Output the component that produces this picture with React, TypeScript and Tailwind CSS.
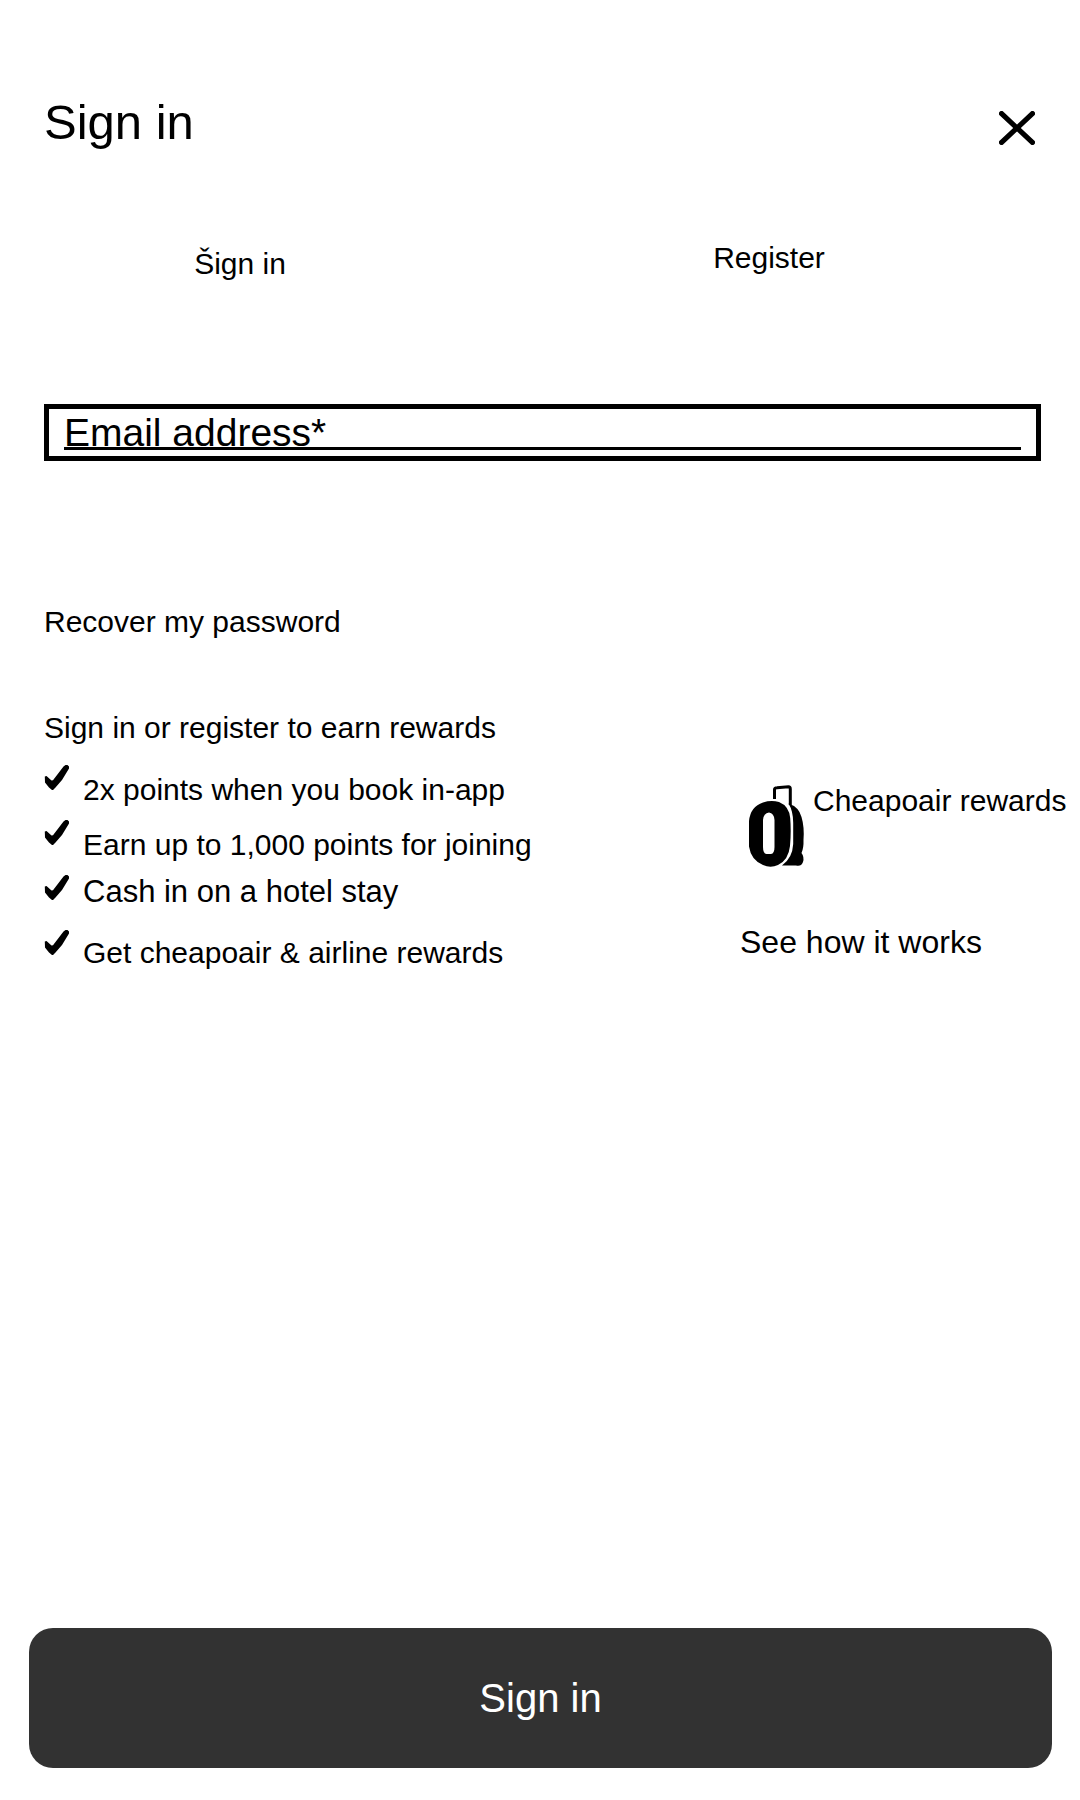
const perks = [
  { text: "2x points when you book in-app", className: "pt-2" },
  { text: "Earn up to 1,000 points for joining", className: "pt-2" },
  { text: "Cash in on a hotel stay", className: "text-[31px]" },
  { text: "Get cheapoair & airline rewards", className: "pt-1.5" },
];

function CloseIcon() {
  return (
    <svg width="36" height="34" viewBox="0 0 36 34" fill="none" stroke="#000" strokeWidth="5.2" strokeLinecap="round" aria-hidden="true">
      <path d="M2.6 2.6 33.4 31.4M33.4 2.6 2.6 31.4" />
    </svg>
  );
}

function CheckIcon() {
  return (
    <svg className="shrink-0" width="26" height="25" viewBox="0 0 26 25" aria-hidden="true">
      <path d="M.8 11.500 2.500 11 7.500 15.500 9 15.200 19.500 1.500 21.500 0H23.500L25 1.500V3.500L18 15 11.500 22.500 9 25H8L5 22.500 1 17.500Z" />
    </svg>
  );
}

function LuggageIcon() {
  return (
    <svg className="shrink-0" width="56" height="83" viewBox="0 0 56 83" aria-hidden="true">
      <path d="M25.500 14V4.500Q25.500 2.800 28 2.800L39.500 1.800Q41.300 1.800 41.300 4V20" fill="none" stroke="#000" strokeWidth="3" />
      <path d="M39.500 18.500Q50 22 52.500 32Q55.500 42 54.500 55Q54.800 63 52.500 68Q55.500 72 54 77Q52 82 47 80.500H33Q43.500 73 44.200 59V38Q44.200 26 39.500 18.500Z" />
      <path
        fillRule="evenodd"
        d="M14 17.500Q22 15 30 17Q40 21 41.200 33Q42.300 47 41 61Q39.500 75 29 80Q21.500 83.500 14 80Q2 75 0 61.500V36Q1.500 21.500 14 17.500ZM14 35V62Q14 68.500 17.500 69H22Q25.500 68.500 25.500 62V35Q25 28 20 27.500Q14.500 28 14 35Z"
      />
    </svg>
  );
}

export default function App() {
  return (
    <main className="flex min-h-screen flex-col bg-white font-['Liberation_Sans',Arial,sans-serif] text-[30px] leading-[34px] text-black">
      <header className="flex items-start justify-between pt-[94px] pr-[45px] pl-[44px]">
        <h1 className="text-[49px] leading-[56px]">Sign in</h1>
        <button type="button" aria-label="Close" className="mt-[17px]">
          <CloseIcon />
        </button>
      </header>

      <nav className="mt-[91px] grid grid-cols-[480fr_578fr] items-start pr-[22px]">
        <button type="button" className="justify-self-center pt-1.5">
          Šign in
        </button>
        <button type="button" className="justify-self-center">
          Register
        </button>
      </nav>

      <form className="flex grow flex-col" onSubmit={(e) => e.preventDefault()}>
        <div className="relative mt-[123px] mr-[39px] ml-[44px] border-[5px] border-black">
          <input
            type="email"
            aria-label="Email address"
            placeholder="Email address*"
            className="block h-[47px] w-full px-[15px] text-[39px] outline-none placeholder:text-black placeholder:opacity-100"
          />
          <span className="pointer-events-none absolute inset-x-[15px] bottom-1.5 h-[3px] bg-black" />
        </div>

        <a href="#recover" className="mt-[144px] ml-[44px] self-start">
          Recover my password
        </a>

        <section className="mt-[72px] pl-[44px]">
          <h2>Sign in or register to earn rewards</h2>
          <div className="mt-5 flex items-start justify-between">
            <ul>
              {perks.map((perk) => (
                <li key={perk.text} className="flex h-[55px] items-start gap-[13px]">
                  <CheckIcon />
                  <span className={perk.className}>{perk.text}</span>
                </li>
              ))}
            </ul>
            <div className="w-[340px] pt-5">
              <div className="flex items-start gap-2 pl-[9px] whitespace-nowrap">
                <LuggageIcon />
                <span className="leading-8">Cheapoair rewards</span>
              </div>
              <a href="#how" className="mt-[57px] block text-[32px]">
                See how it works
              </a>
            </div>
          </div>
        </section>

        <button
          type="submit"
          className="mt-auto mr-7 mb-8 ml-[29px] h-[140px] rounded-3xl bg-[#323232] text-[40px] text-white"
        >
          Sign in
        </button>
      </form>
    </main>
  );
}
